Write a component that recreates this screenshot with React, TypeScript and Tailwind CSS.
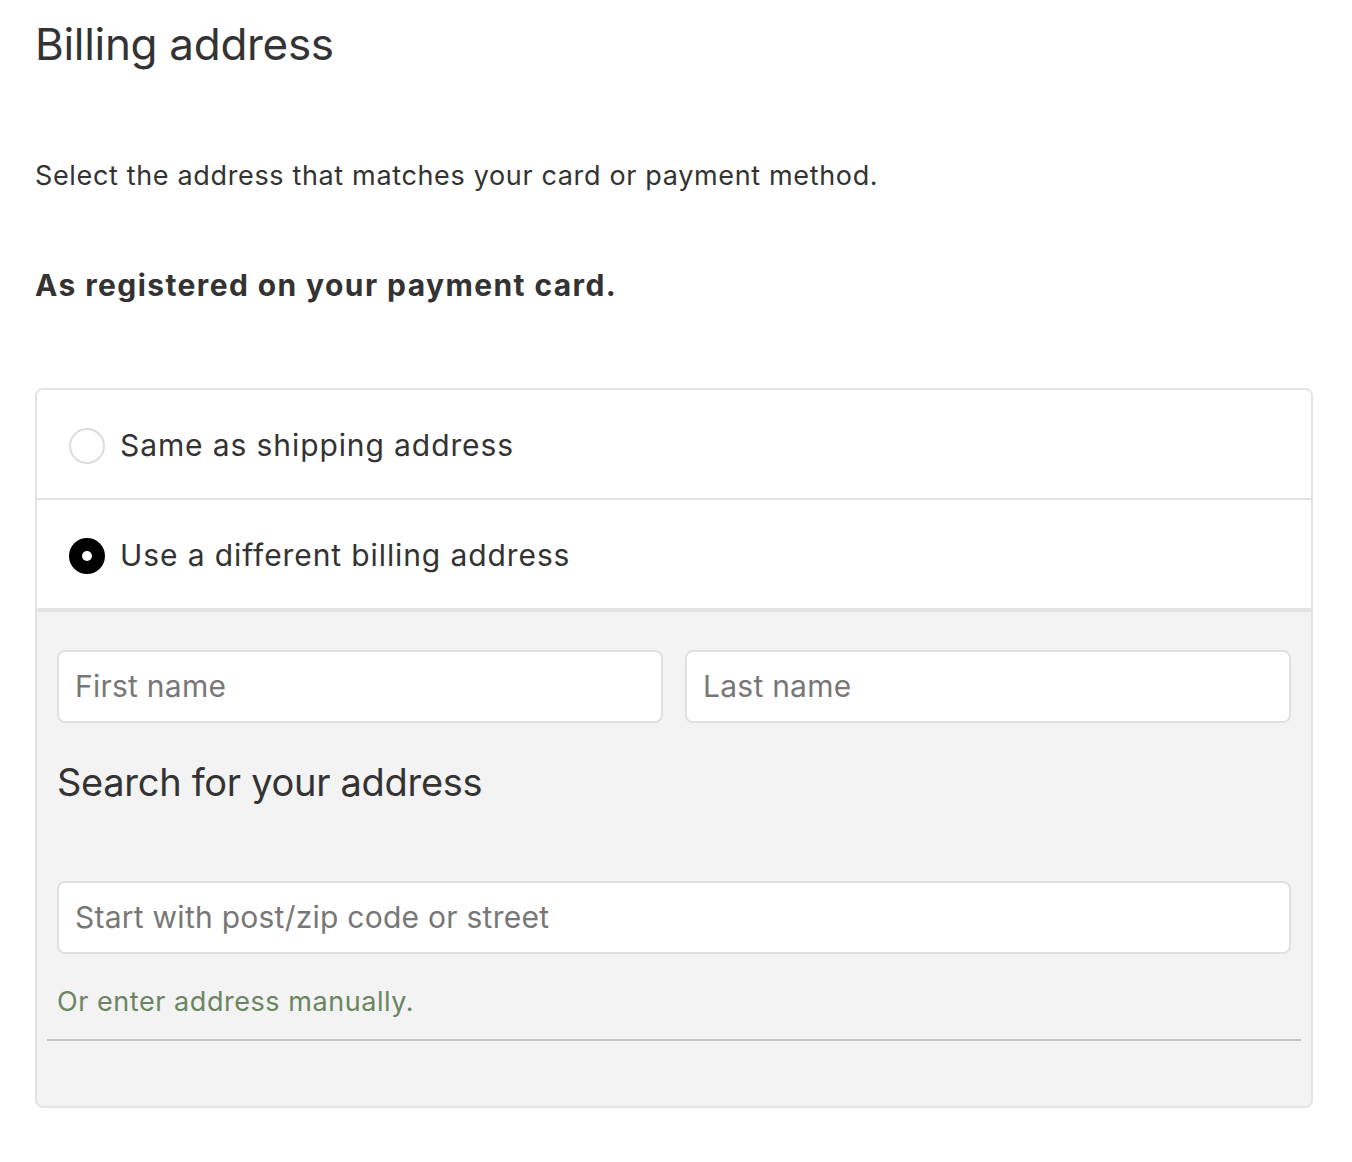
import React, { useState } from 'react';

const font = { fontFamily: 'Inter, "Noto Sans", sans-serif' };

const RadioRow: React.FC<{ label: string; checked: boolean; onSelect: () => void; last?: boolean }> = ({ label, checked, onSelect, last }) => (
  <label className={`flex h-[110px] cursor-pointer items-center gap-[15px] bg-white pt-[4px] pl-[32px] ${last ? '' : 'border-b-2 border-[#e3e3e3]'}`}>
    <input type="radio" className="sr-only" checked={checked} onChange={onSelect} />
    {checked ? (
      <span className="flex h-[36px] w-[36px] items-center justify-center rounded-full bg-black">
        <span className="h-[10px] w-[10px] rounded-full bg-white" />
      </span>
    ) : (
      <span className="h-[36px] w-[36px] rounded-full border-2 border-[#dcdcdc] bg-white" />
    )}
    <span className="text-[30px] tracking-[0.9px] text-[#333333]">{label}</span>
  </label>
);

const Field: React.FC<{ placeholder: string }> = ({ placeholder }) => (
  <input
    type="text"
    placeholder={placeholder}
    className="h-[73px] w-full rounded-[8px] border-2 border-[#e0e0e0] bg-white px-[16px] text-[30px] tracking-[0.25px] text-[#333333] placeholder:text-[#777777] outline-none"
    style={font}
  />
);

export default function App() {
  const [choice, setChoice] = useState<'same' | 'different'>('different');

  return (
    <div className="min-h-screen bg-white px-[35px] pt-[14px] text-[#333333]" style={font}>
      <h1 className="text-[44px] font-normal leading-[60px] tracking-[-0.3px] text-[#333333]">Billing address</h1>

      <p className="mt-[82px] text-[27px] tracking-[0.65px] text-[#333333]">Select the address that matches your card or payment method.</p>

      <p className="mt-[66px] text-[30px] font-bold tracking-[1.4px] text-[#333333]">As registered on your payment card.</p>

      <div className="mt-[80px] mr-[4px] overflow-hidden rounded-[8px] border-2 border-[#e3e3e3]">
        <RadioRow label="Same as shipping address" checked={choice === 'same'} onSelect={() => setChoice('same')} />
        <RadioRow label="Use a different billing address" checked={choice === 'different'} onSelect={() => setChoice('different')} />

        {choice === 'different' && (
          <div className="border-t-2 border-[#e3e3e3] bg-[#f3f3f3] px-[20px] pt-[38px] pb-[65px]">
            <div className="grid grid-cols-2 gap-[22px]">
              <Field placeholder="First name" />
              <Field placeholder="Last name" />
            </div>

            <h2 className="mt-[36px] text-[38px] font-normal leading-[46px] tracking-[-0.3px] text-[#333333]">Search for your address</h2>

            <div className="mt-[76px]">
              <Field placeholder="Start with post/zip code or street" />
            </div>

            <a href="#" className="mt-[28px] block text-[27px] tracking-[0.55px] text-[#6a8560]">Or enter address manually.</a>

            <div className="mt-[17px] -mx-[10px] h-[2px] bg-[#c4c4c4]" />
          </div>
        )}
      </div>
    </div>
  );
}
